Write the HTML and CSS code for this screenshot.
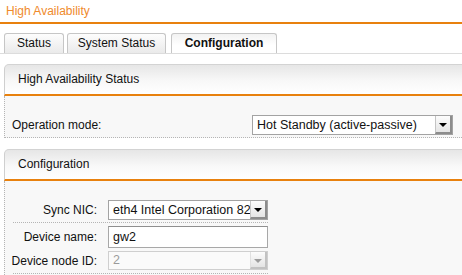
FILE: index.html
```html
<!DOCTYPE html>
<html lang="en">
<head>
    <meta charset="UTF-8">
    <title>High Availability</title>
    <link rel="stylesheet" href="styles.css">
</head>
<body>
    <div class="page-title">High Availability</div>

    <!-- tabs -->
    <div class="tabs">
        <div class="tab tab-status">Status</div>
        <div class="tab tab-system">System Status</div>
        <div class="tab tab-config active">Configuration</div>
    </div>

    <div class="panel">
        <div class="panel-header">High Availability Status</div>
        <div class="panel-body">
            <div class="mode-row">
                <div class="mode-label">Operation mode:</div>
                <div class="select select-mode">
                    <span class="select-value">Hot Standby (active-passive)</span>
                    <span class="select-btn"><span class="arrow"></span></span>
                </div>
            </div>
        </div>
    </div>

    <div class="panel panel-config">
        <div class="panel-header">Configuration</div>
        <div class="panel-body config-body">
            <div class="form-row row-nic">
                <div class="form-label">Sync NIC:</div>
                <div class="select select-form">
                    <span class="select-value">eth4 Intel Corporation 82574L</span>
                    <span class="select-btn"><span class="arrow"></span></span>
                </div>
            </div>
            <div class="form-row row-name">
                <div class="form-label">Device name:</div>
                <div class="text-input">gw2</div>
            </div>
            <div class="form-row row-node">
                <div class="form-label">Device node ID:</div>
                <div class="select select-form disabled">
                    <span class="select-value">2</span>
                    <span class="select-btn"><span class="arrow"></span></span>
                </div>
            </div>
        </div>
    </div>
</body>
</html>
```

FILE: styles.css
```css
* {
    margin: 0;
    padding: 0;
    box-sizing: border-box;
}

body {
    font-family: 'Liberation Sans', Arial, Helvetica, sans-serif;
    font-size: 12px;
    color: #111;
    background-color: #fff;
    width: 462px;
    overflow: hidden;
}

.page-title {
    height: 24px;
    line-height: 22px;
    padding-left: 6px;
    color: #ef8a2c;
    font-size: 12px;
    border-bottom: 2px solid #e8810e;
}

/* tabs */
.tabs {
    display: flex;
    align-items: flex-end;
    height: 21px;
    margin-top: 9px;
    padding-left: 4px;
    border-bottom: 1px solid #dcdcdc;
}

.tab {
    height: 20px;
    line-height: 19px;
    text-align: center;
    color: #111;
    border: 1px solid #c6c6c6;
    border-bottom: none;
    border-radius: 3px 3px 0 0;
    background: linear-gradient(#fdfdfd, #eaeaea);
}

.tab-status {
    width: 60px;
}

.tab-system {
    width: 99px;
    margin-left: 3px;
}

.tab-config {
    width: 106px;
    margin-left: 5px;
}

.tab.active {
    font-weight: bold;
    background: linear-gradient(#f2f2f2, #fff 60%);
}

/* panels */
.panel {
    width: 540px;
    margin-top: 10px;
    margin-left: 4px;
}

.panel-config {
    margin-top: 11px;
}

.panel-header {
    height: 32px;
    line-height: 29px;
    padding-left: 13px;
    border-top: 1px solid #d3d3d3;
    border-left: 1px solid #cfcfcf;
    border-bottom: 2px solid #e8810e;
    border-top-left-radius: 5px;
    background: linear-gradient(#e6e6e6, #f8f8f8 55%, #fff);
}

.panel-body {
    background-color: #f8f8f8;
    border-left: 1px dotted #b5b5b5;
}

.mode-row {
    display: flex;
    align-items: center;
    padding: 19px 0 2px 7px;
    border-bottom: 1px dotted #b5b5b5;
}

.mode-label {
    width: 240px;
}

.config-body {
    padding-top: 19px;
    height: 100px;
}

.form-row {
    display: flex;
    align-items: center;
    gap: 11px;
    width: 255px;
    margin-left: 8px;
}

.form-label {
    width: 84px;
    flex-shrink: 0;
    display: flex;
    justify-content: flex-end;
    white-space: nowrap;
}

.row-nic {
    padding-bottom: 2px;
    border-bottom: 1px dotted #b5b5b5;
}

.row-name {
    padding-top: 3px;
}

.row-node {
    padding: 3px 0 3px;
    border-bottom: 1px dotted #b5b5b5;
}

/* select boxes */
.select {
    display: flex;
    height: 20px;
    background-color: #fff;
    border: 1px solid #a3a3a3;
    overflow: hidden;
}

.select-mode {
    width: 201px;
}

.select-form {
    width: 160px;
}

.select-value {
    flex: 1;
    padding-left: 4px;
    line-height: 18px;
    font-size: 12.5px;
    white-space: nowrap;
    overflow: hidden;
}

.select-btn {
    width: 17px;
    flex-shrink: 0;
    display: flex;
    align-items: center;
    justify-content: center;
    background: linear-gradient(#fcfcfc, #e4e4e4);
    border-left: 1px solid #c4c4c4;
    border-right: 2px solid #8c8c8c;
    border-bottom: 2px solid #8c8c8c;
}

.arrow {
    width: 0;
    height: 0;
    margin-top: 2px;
    border-left: 4px solid transparent;
    border-right: 4px solid transparent;
    border-top: 4px solid #000;
}

.select.disabled {
    height: 19px;
    border-color: #cfcfcf;
    background-color: #fafafa;
}

.select.disabled .select-value {
    color: #9a9a9a;
    line-height: 17px;
}

.select.disabled .select-btn {
    border-left-color: #e0e0e0;
    border-right-color: #c2c2c2;
    border-bottom-color: #c2c2c2;
}

.select.disabled .arrow {
    border-top-color: #9c9c9c;
}

.text-input {
    width: 160px;
    height: 22px;
    line-height: 20px;
    padding-left: 4px;
    font-size: 12.5px;
    background-color: #fff;
    border: 1px solid #a8a8a8;
    border-top-color: #8f8f8f;
}
```
